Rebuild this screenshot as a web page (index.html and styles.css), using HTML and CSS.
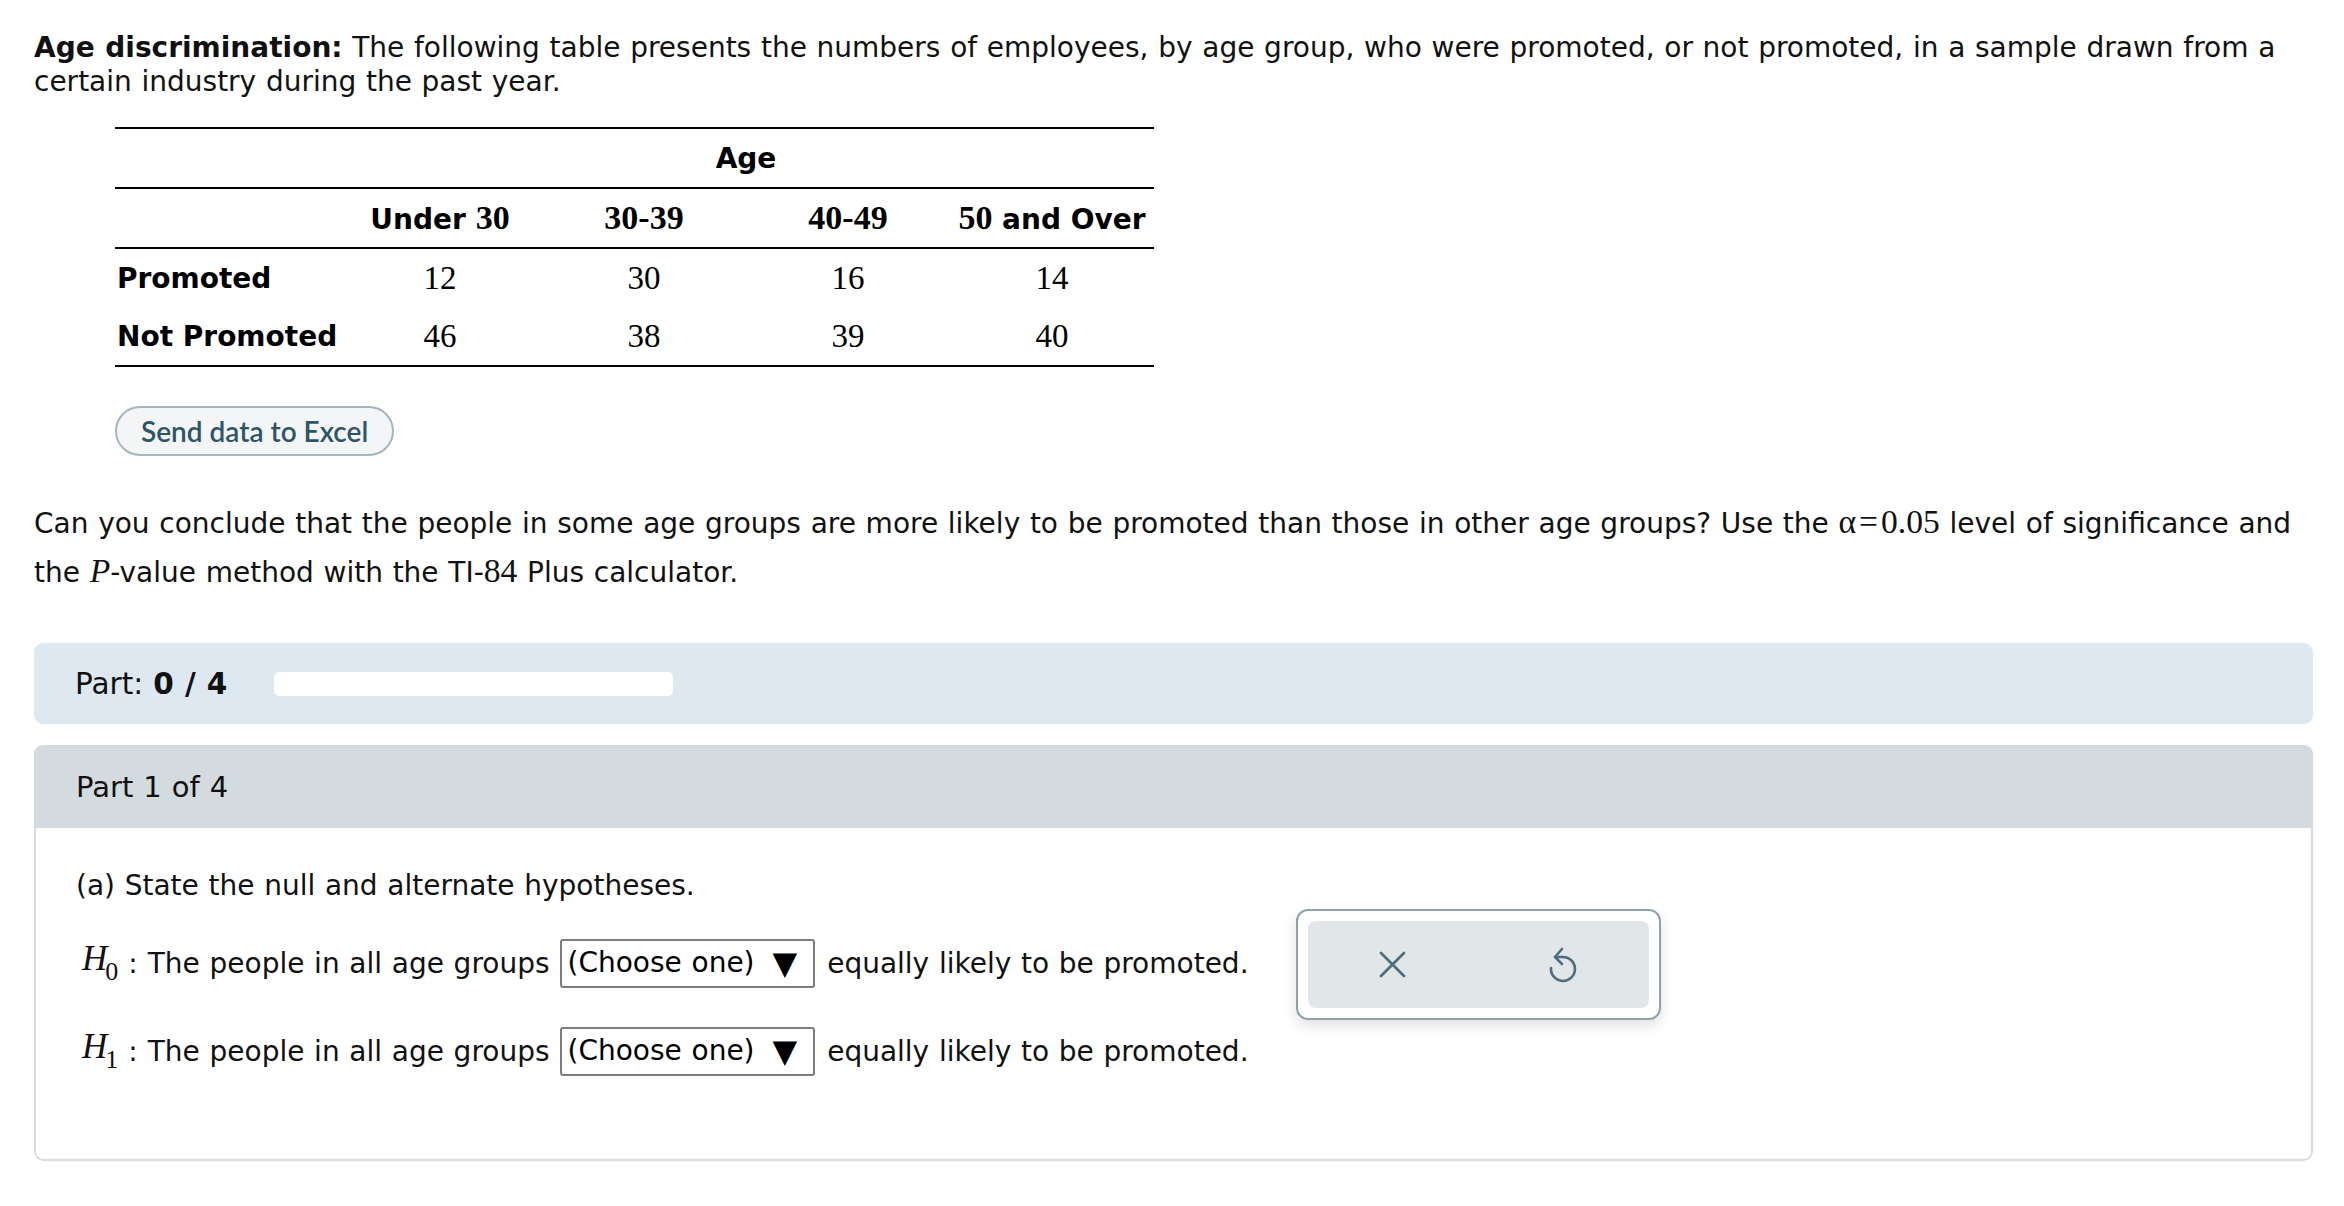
FILE: index.html
```html
<!DOCTYPE html>
<html>
<head>
<meta charset="utf-8">
<link rel="stylesheet" href="styles.css">
</head>
<body>
<div class="page">
  <p class="intro"><b>Age discrimination:</b> The following table presents the numbers of employees, by age group, who were promoted, or not promoted, in a sample drawn from a certain industry during the past year.</p>

  <table class="data">
    <colgroup>
      <col class="c-label"><col class="c-num"><col class="c-num"><col class="c-num"><col class="c-num">
    </colgroup>
    <tr class="age-row"><th></th><th colspan="4">Age</th></tr>
    <tr class="head-row">
      <th></th>
      <th>Under <span class="num">30</span></th>
      <th><span class="num">30-39</span></th>
      <th><span class="num">40-49</span></th>
      <th><span class="num">50</span> and Over</th>
    </tr>
    <tr class="val-row"><th class="rl">Promoted</th><td>12</td><td>30</td><td>16</td><td>14</td></tr>
    <tr class="val-row last"><th class="rl">Not Promoted</th><td>46</td><td>38</td><td>39</td><td>40</td></tr>
  </table>

  <button class="excel">Send data to Excel</button>

  <p class="question">Can you conclude that the people in some age groups are more likely to be promoted than those in other age groups? Use the <span class="m">α<span class="eq">=</span>0.05</span> level of significance and the <span class="m i">P</span>-value method with the TI-<span class="m">84</span> Plus calculator.</p>

  <div class="partbar">
    <span>Part: <b>0 / 4</b></span>
    <span class="progress"></span>
  </div>

  <div class="section">
    <div class="sec-head">Part 1 of 4</div>
    <div class="sec-body">
      <div class="qcol">
        <p class="qa">(a) State the null and alternate hypotheses.</p>
        <div class="hrow">
          <span class="hyp"><span class="m i">H</span><sub>0</sub></span><span class="colon">:</span>
          <span class="ht">The people in all age groups</span>
          <span class="select">(Choose one) <span class="tri">▼</span></span>
          <span class="ht">equally likely to be promoted.</span>
        </div>
        <div class="hrow">
          <span class="hyp"><span class="m i">H</span><sub>1</sub></span><span class="colon">:</span>
          <span class="ht">The people in all age groups</span>
          <span class="select">(Choose one) <span class="tri">▼</span></span>
          <span class="ht">equally likely to be promoted.</span>
        </div>
      </div>
      <div class="actions">
        <div class="actions-inner">
          <span class="act">
            <svg width="27" height="27" viewBox="0 0 27 27"><path d="M2 2 L25 25 M25 2 L2 25" fill="none" stroke="#4d6e7a" stroke-width="2.7" stroke-linecap="round"/></svg>
          </span>
          <span class="act">
            <svg width="30" height="38" viewBox="-15 -23 30 38"><path d="M-1 -12 A12 12 0 1 1 -12 -1" fill="none" stroke="#4d6e7a" stroke-width="2.6" stroke-linecap="round"/><path d="M-1 -12 L-8 -12" fill="none" stroke="#4d6e7a" stroke-width="2.6" stroke-linecap="round"/><path d="M-1 -20 L-8 -12 L-1 -5" fill="none" stroke="#4d6e7a" stroke-width="2.6" stroke-linecap="round" stroke-linejoin="round"/></svg>
          </span>
        </div>
      </div>
    </div>
  </div>
</div>
</body>
</html>
```

FILE: styles.css
```css
html, body {
  margin: 0;
  padding: 0;
  background: #ffffff;
}
body {
  font-family: "DejaVu Sans", Verdana, sans-serif;
  font-size: 28px;
  word-spacing: 0.8px;
  color: #111;
}
.page {
  padding: 31px 31px 40px 34px;
}
p { margin: 0; }
.intro {
  font-size: 28px;
  line-height: 34px;
}
.data {
  margin: 28px 0 0 81px;
  border-collapse: collapse;
  border-top: 2px solid #000;
  border-bottom: 2px solid #000;
  color: #000;
  word-spacing: 0;
}
.c-label { width: 223px; }
.c-num { width: 204px; }
.data th, .data td {
  padding: 0;
  height: 58px;
  text-align: center;
  vertical-align: middle;
}
.age-row, .head-row {
  border-bottom: 2px solid #000;
}
.data th {
  font-weight: bold;
}
.num {
  font-family: "Liberation Serif", "Times New Roman", serif;
  font-size: 34px;
  font-weight: bold;
}
.data td {
  font-family: "Liberation Serif", "Times New Roman", serif;
  font-size: 33px;
}
.data th.rl {
  text-align: left;
  padding-left: 2px;
}
.excel {
  display: block;
  margin: 39px 0 0 81px;
  height: 50px;
  padding: 0 24px;
  border: 2px solid #a4b5bd;
  border-radius: 25px;
  background: #f3f5f7;
  color: #2e5565;
  font-family: Lato, "Open Sans", sans-serif;
  font-size: 28px;
  font-weight: 600;
  word-spacing: 0;
}
.question {
  margin-top: 42px;
  line-height: 47px;
}
.m {
  font-family: "Liberation Serif", "Times New Roman", serif;
  font-size: 1.2em;
}
.i { font-style: italic; }
.eq { margin: 0 3px; }
.partbar {
  margin-top: 47px;
  height: 81px;
  background: #dde8f0;
  border-radius: 9px;
  display: flex;
  align-items: center;
  gap: 47px;
  padding-left: 41px;
  font-size: 29.5px;
}
.progress {
  width: 399px;
  height: 24px;
  background: #fff;
  border-radius: 5px;
}
.section {
  margin-top: 21px;
  border-radius: 9px;
  overflow: hidden;
}
.sec-head {
  height: 83px;
  background: #d3dbde;
  display: flex;
  align-items: center;
  padding-left: 42px;
  font-size: 29px;
}
.sec-body {
  border: 2px solid #d5dde0;
  border-top: 0;
  border-radius: 0 0 9px 9px;
  display: flex;
  align-items: flex-start;
  padding: 41px 0 78px 40px;
}
.qcol {
  display: flex;
  flex-direction: column;
}
.qa {
  line-height: 34px;
}
.hrow {
  display: flex;
  align-items: center;
  height: 60px;
  margin-top: 30px;
  white-space: nowrap;
}
.hrow + .hrow { margin-top: 28px; }
.hyp {
  margin-left: 6px;
  font-size: 34px;
  font-family: "Liberation Serif", serif;
}
.hyp .m { font-size: 35px; }
.hyp sub {
  font-size: 26px;
  font-style: normal;
  vertical-align: -10px;
  margin-left: -2px;
}
.colon { margin: 0 10px 0 10px; }
.select {
  display: inline-flex;
  align-items: center;
  height: 45px;
  margin: 0 12px 0 10px;
  padding: 0 16px 0 6px;
  border: 2px solid #7d7d7d;
  border-radius: 3px;
  color: #000;
  line-height: 1;
}
.tri {
  font-size: 32px;
  margin-left: 18px;
}
.actions {
  margin: 40px 0 0 47px;
  border: 2px solid #8fa1a9;
  border-radius: 12px;
  box-shadow: 0 6px 14px rgba(0, 0, 0, 0.12);
  padding: 10px;
  box-sizing: border-box;
  width: 365px;
  height: 111px;
}
.actions-inner {
  height: 100%;
  background: #e1e6e8;
  border-radius: 8px;
  display: flex;
}
.act {
  flex: 1;
  display: flex;
  align-items: center;
  justify-content: center;
}
```
